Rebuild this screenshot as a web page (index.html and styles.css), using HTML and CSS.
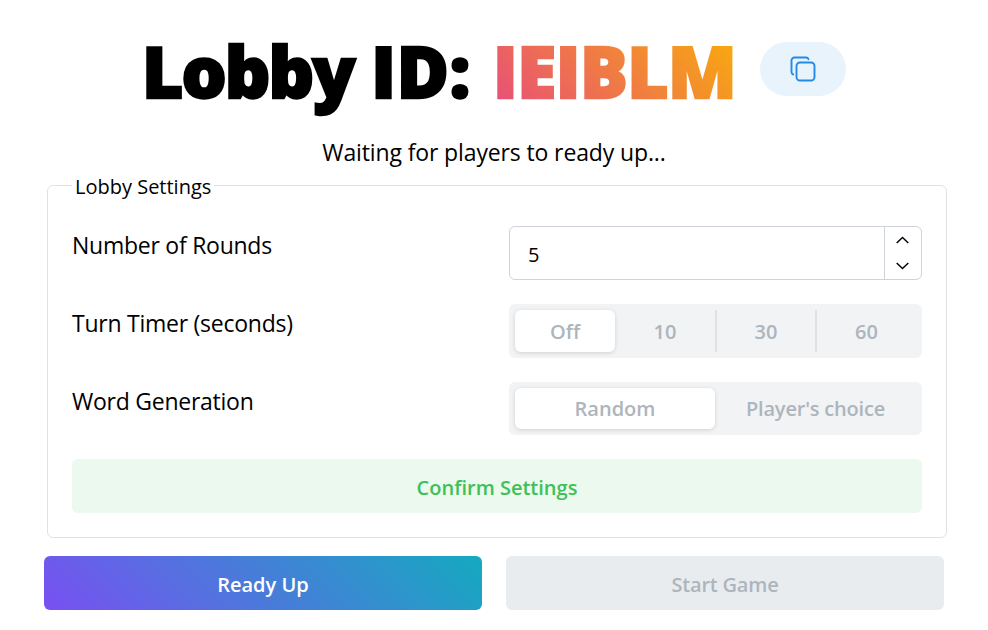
FILE: index.html
```html
<!DOCTYPE html>
<html lang="en">
<head>
<meta charset="utf-8">
<title>Lobby</title>
<link rel="stylesheet" href="styles.css">
</head>
<body>
<main class="lobby">
  <header class="header">
    <h1 class="title"><span class="t-label">Lobby <span class="t-id">ID:</span></span><span class="t-code">IEIBLM</span></h1>
    <button class="copy" aria-label="Copy">
      <svg width="28" height="28" viewBox="0 0 28 28" fill="none" stroke="#228be6" stroke-width="1.9" stroke-linecap="round" stroke-linejoin="round"><rect x="7.500" y="7.500" width="18" height="18" rx="3.500"/><path d="M19.500 4.200c-.4-1.100-1.200-1.700-2.500-1.700H5.500a3 3 0 0 0-3 3V17c0 1.300.6 2.100 1.700 2.500"/></svg>
    </button>
  </header>
  <p class="status"><span class="t-status">Waiting for players to ready up...</span></p>
  <fieldset class="settings">
    <legend><span class="t-legend">Lobby Settings</span></legend>
    <div class="row">
      <span class="name t-rounds">Number of Rounds</span>
      <div class="number"><span class="value">5</span>
        <div class="steps">
          <span class="step"><svg width="14" height="8" viewBox="0 0 14 8"><path d="M.7 7 6.500 1.500 12.300 7"/></svg></span>
          <span class="step"><svg width="14" height="8" viewBox="0 0 14 8"><path d="M.7 1 6.500 6.500 12.300 1"/></svg></span>
        </div>
      </div>
    </div>
    <div class="row">
      <span class="name t-timer">Turn Timer (seconds)</span>
      <div class="segments four">
        <span class="seg active">Off</span><span class="seg">10</span><span class="seg divided">30</span><span class="seg divided">60</span>
      </div>
    </div>
    <div class="row">
      <span class="name t-word">Word Generation</span>
      <div class="segments short">
        <span class="seg active"><span class="t-random">Random</span></span><span class="seg"><span class="t-choice">Player's choice</span></span>
      </div>
    </div>
    <button class="btn confirm"><span class="t-confirm">Confirm Settings</span></button>
  </fieldset>
  <div class="actions">
    <button class="btn ready"><span class="t-ready">Ready Up</span></button>
    <button class="btn start" disabled><span class="t-start">Start Game</span></button>
  </div>
</main>
</body>
</html>
```
FILE: styles.css
```css
* { box-sizing: border-box; }
body {
  margin: 0;
  background: #fff;
  color: #000;
  font-family: "Segoe UI", "Open Sans", "Noto Sans", sans-serif;
  font-size: 23px;
}
button { font: inherit; border: 0; padding: 0; margin: 0; }
.lobby { padding: 18px 41px 0 44px; }
.header { display: flex; align-items: center; padding-left: 98px; height: 106px; }
.title { display: flex; margin: 0; font-size: 71px; line-height: 106px; font-weight: 800; white-space: nowrap; }
.t-label { width: 351px; letter-spacing: -1.9px; word-spacing: 1px; -webkit-text-stroke: 2.4px #000; }
.t-id { letter-spacing: 0.8px; }
.t-code {
  width: 242px;
  letter-spacing: -0.5px;
  -webkit-text-stroke: 2.4px transparent;
  background: linear-gradient(45deg, #e64980, #fab005);
  -webkit-background-clip: text;
  background-clip: text;
  color: transparent;
}
.copy { width: 86px; height: 54px; margin: -4px 0 0 25px; border-radius: 27px; background: #e8f3fc; display: grid; place-items: center; }
.status { margin: 10px 0 0; height: 36px; line-height: 36px; text-align: center; padding-right: 3px; letter-spacing: -0.13px; }
.settings { margin: 2px 0 0 3px; width: 900px; height: 366px; border: 1px solid #dee2e6; border-radius: 6px; padding: 27px 24px 0; }
legend { padding: 0 3px; height: 27px; line-height: 27px; font-size: 20px; }
.t-legend { display: block; line-height: 30px; }
.row { display: grid; grid-template-columns: 437px 413px; height: 78px; }
.name { line-height: 38px; justify-self: start; white-space: nowrap; letter-spacing: -0.25px; }
.number { height: 54px; border: 1px solid #ced4da; border-radius: 6px; display: flex; justify-content: space-between; }
.value { padding-left: 18px; line-height: 55px; font-size: 20px; }
.steps { width: 37px; border-left: 1px solid #ced4da; display: grid; grid-template-rows: 1fr 1fr; }
.step { display: grid; place-items: center; }
.step path { fill: none; stroke: #000; stroke-width: 1.5; }
.segments { height: 54px; background: #f1f3f5; border-radius: 6px; padding: 6px; display: grid; grid-template-columns: 200px 201px; color: #adb5bd; font-size: 20px; font-weight: 600; }
.four { grid-template-columns: 100px 100px 100px 101px; }
.short { height: 53px; }
.seg { display: grid; place-items: center; }
.t-choice { letter-spacing: -0.2px; }
.active { background: #fff; border-radius: 6px; box-shadow: 0 1px 4px rgba(0,0,0,.14); }
.divided { border-left: 2px solid #dee2e6; }
.btn { height: 54px; border-radius: 6px; font-size: 20px; font-weight: 600; padding-top: 2px; }
.confirm { display: block; width: 850px; margin-top: -1px; background: #ebf9ee; color: #40c057; }
.actions { display: grid; grid-template-columns: 438px 438px; gap: 24px; margin-top: 18px; }
.ready { background: linear-gradient(45deg, #7950f2, #15aabf); color: #fff; }
.start { background: #e9ecef; color: #adb5bd; }
.t-start { letter-spacing: -0.2px; }
```
